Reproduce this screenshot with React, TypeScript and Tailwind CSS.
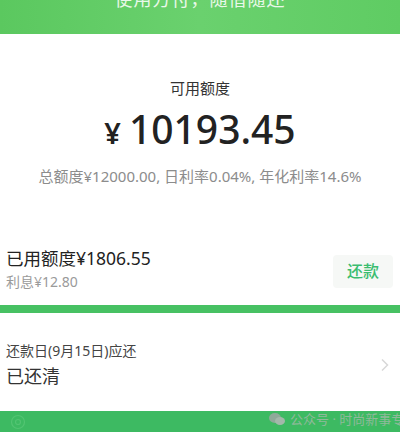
export default function App() {
  return (
    <div
      className="relative w-[400px] h-[432px] overflow-hidden bg-white flex flex-col"
      style={{ fontFamily: '"Noto Sans", "Noto Sans CJK SC", sans-serif' }}
    >
      {/* header band, title scrolled mostly out of view */}
      <div className="relative h-[34px] shrink-0 bg-gradient-to-r from-[#5bc85f] via-[#6ad16e] to-[#5fcc63] overflow-hidden">
        <p className="absolute left-0 right-0 -top-[13px] text-center text-[18px] leading-[24px] tracking-[1px] text-[#e9f8e9]">
          使用方付，随借随还
        </p>
      </div>

      <section className="flex flex-col items-center pt-[44px]">
        <p className="text-[15px] leading-[20px] text-[#333]">可用额度</p>
        <p className="mt-[11px] flex items-baseline text-[#222] leading-none">
          <span className="text-[29px] font-semibold mr-[8px]">¥</span>
          <span className="text-[39px] font-medium">10193.45</span>
        </p>
        <p className="mt-[18px] text-[15px] leading-[20px] text-[#8c8c8c]">
          总额度¥12000.00, 日利率0.04%, 年化利率14.6%
        </p>
      </section>

      <section className="mt-[61px] flex items-center justify-between pl-[6px] pr-[7px]">
        <div className="flex flex-col">
          <p className="text-[17.5px] leading-[22px] text-[#222]">已用额度¥1806.55</p>
          <p className="mt-[4px] text-[14px] leading-[18px] text-[#9a9a9a]">利息¥12.80</p>
        </div>
        <button className="mt-[4px] w-[60px] h-[33px] rounded-[4px] bg-[#f6f8f6] text-[16px] font-medium text-[#3bbd6f]">
          还款
        </button>
      </section>

      <div className="mt-[14px] h-[8px] shrink-0 bg-[#47c163]" />

      <section className="flex items-center justify-between pl-[6px] pr-[8px] pt-[28px]">
        <div className="flex flex-col">
          <p className="text-[14px] leading-[20px] text-[#444]">还款日(9月15日)应还</p>
          <p className="mt-[3px] text-[18px] leading-[24px] text-[#333]">已还清</p>
        </div>
        <svg width="10" height="14" viewBox="0 0 10 14" className="mr-[2px]">
          <path d="M2 1.5 L7.5 7 L2 12.5" fill="none" stroke="#d8d8d8" strokeWidth="1.5" />
        </svg>
      </section>

      <div className="mt-auto relative h-[21px] shrink-0 bg-[#3dba62]">
        <svg width="16" height="16" viewBox="0 0 16 16" className="absolute left-[10px] top-[3px]">
          <circle cx="8" cy="8" r="6.5" fill="none" stroke="#52c472" strokeWidth="1.2" />
          <circle cx="8" cy="8" r="2.5" fill="none" stroke="#52c472" strokeWidth="1.2" />
        </svg>
      </div>

      {/* watermark over the bottom edge */}
      <div className="absolute left-[268px] top-[411px] flex items-center gap-[4px] text-[13px] leading-[16px] text-[#8fb99a] whitespace-nowrap">
        <svg width="18" height="14" viewBox="0 0 18 14">
          <ellipse cx="7" cy="6" rx="6" ry="5" fill="#8fa999" />
          <ellipse cx="12" cy="9" rx="5" ry="4" fill="#a3b8aa" />
        </svg>
        <span>公众号 · 时尚新事专</span>
      </div>
    </div>
  );
}
